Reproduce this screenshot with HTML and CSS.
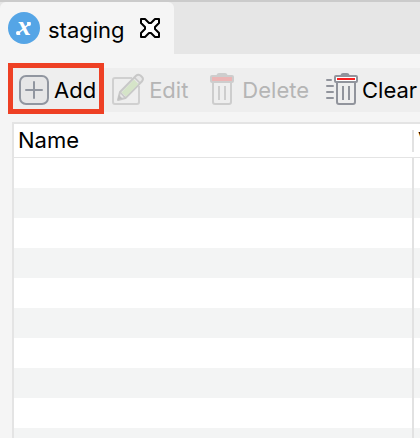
FILE: index.html
```html
<!DOCTYPE html>
<html lang="en">
<head>
<meta charset="utf-8">
<title>staging</title>
<link rel="stylesheet" href="styles.css">
</head>
<body>
<div class="app">
  <header class="tabs">
    <div class="tab">
      <svg class="tab-logo" viewBox="0 0 32 32" aria-hidden="true">
        <circle cx="16" cy="16" r="16" fill="#55a5e6"/>
        <text class="logo-letter" x="16" y="23" text-anchor="middle">x</text>
        <circle cx="21" cy="12" r="2" fill="#fff"/>
        <circle cx="10" cy="21" r="2" fill="#fff"/>
      </svg>
      <span class="tab-title">staging</span>
      <button class="tab-close" type="button" aria-label="Close tab">
        <svg viewBox="0 0 20 20" aria-hidden="true">
          <path d="M1 1H5L9 5H11L15 1H19V5L15 9V11L19 15V19H15L11 15H9L5 19H1V15L5 11V9L1 5Z" fill="#fff" stroke="#000" stroke-width="2" stroke-linejoin="round"/>
        </svg>
      </button>
    </div>
  </header>
  <main class="panel">
    <div class="toolbar">
      <button class="tool tool-marked" type="button">
        <svg class="icon-add" viewBox="0 0 30 30" aria-hidden="true">
          <g fill="none" stroke="#9196a0" stroke-width="2">
            <rect x="1" y="1" width="28" height="28" rx="6" fill="#e6e6e7"/>
            <path d="M15 7V23M7 15H23" stroke-linecap="round"/>
          </g>
        </svg>
        <span>Add</span>
      </button>
      <button class="tool tool-edit" type="button" disabled>
        <svg class="icon-edit" viewBox="0 0 32 32" aria-hidden="true">
          <path d="M20 5H3Q1 5 1 7V29Q1 31 3 31H25Q27 31 27 29V13" fill="none" stroke="#d0d0d0" stroke-width="2"/>
          <path d="M6 27L8 19L24 2.800Q26 .8 28.500 2.500L30 4Q32 6 29.800 8.500L13.500 25Z" fill="#e8e8e8" stroke="#c8c8c8" stroke-width="2" stroke-linejoin="round"/>
          <path d="M9.500 19.500L22 6.500L26.500 11L14 23.500Z" fill="#d5e4c8"/>
          <path d="M22.500 4.500L28 10M8 19L13.500 25" stroke="#c8c8c8" stroke-width="1.500"/>
          <path d="M5.500 27L7 22L10.500 25.500Z" fill="#c0c0c0"/>
        </svg>
        <span>Edit</span>
      </button>
      <button class="tool tool-delete" type="button" disabled>
        <svg class="icon-trash" viewBox="0 0 24 32" aria-hidden="true">
          <path d="M6.500 2Q7 0 9 0H15Q17 0 17.500 2Z" fill="#cdcdcd"/>
          <path d="M3 10V29Q3 31 5 31H19Q21 31 21 29V10M9 13V27M15 13V27" fill="none" stroke="#cdcdcd" stroke-width="2"/>
          <rect x="1" y="3" width="22" height="6" rx="1" fill="#ebb5b5" stroke="#cdcdcd" stroke-width="2"/>
        </svg>
        <span>Delete</span>
      </button>
      <button class="tool tool-clear" type="button">
        <svg class="icon-clear" viewBox="0 0 32 32" aria-hidden="true">
          <path d="M14.500 2Q15 0 17 0H21Q23 0 23.500 2Z" fill="#91949c"/>
          <path d="M11 10V29Q11 31 13 31H27Q29 31 29 29V10M17 13V27M23 13V27" fill="none" stroke="#91949c" stroke-width="2"/>
          <rect x="9" y="3" width="22" height="6" rx="1" fill="#fff" stroke="#91949c" stroke-width="2"/>
          <rect x="11" y="5" width="18" height="2" fill="#fa2020"/>
          <path d="M1 7H5M1 13H7M1 19H7M1 25H7" stroke="#91949c" stroke-width="2" stroke-linecap="round"/>
        </svg>
        <span>Clear</span>
      </button>
    </div>
    <table class="grid">
      <colgroup><col class="col-name"><col></colgroup>
      <thead>
        <tr><th scope="col"><div class="head">Name</div></th><th scope="col"><div class="head head-last">Value</div></th></tr>
      </thead>
      <tbody>
        <tr><td></td><td></td></tr>
        <tr><td></td><td></td></tr>
        <tr><td></td><td></td></tr>
        <tr><td></td><td></td></tr>
        <tr><td></td><td></td></tr>
        <tr><td></td><td></td></tr>
        <tr><td></td><td></td></tr>
        <tr><td></td><td></td></tr>
        <tr><td></td><td></td></tr>
        <tr><td></td><td></td></tr>
      </tbody>
    </table>
  </main>
</div>
</body>
</html>
```
FILE: styles.css
```css
* {
  box-sizing: border-box;
}

body {
  margin: 0;
  background: #f5f5f5;
  color: #000;
  font: 22px/26px Inter, sans-serif;
}

.app {
  height: 100vh;
  overflow: hidden;
}

.tabs {
  display: flex;
  border-top: 2px solid #cbcbcb;
  background: #e6e6e6;
}

.tab {
  display: flex;
  align-items: center;
  padding: 0 14px 0 8px;
  height: 52px;
  border-radius: 6px 6px 0 0;
  background: #f5f5f5;
}

.tab-logo {
  width: 32px;
  height: 32px;
}

.logo-letter {
  fill: #fff;
  font: italic bold 28px "Liberation Serif", serif;
}

.tab-title {
  padding: 4px 15px 0 8px;
}

.tab-close {
  display: flex;
  padding: 0;
  border: 0;
  background: none;
}

.tab-close svg {
  width: 20px;
  height: 20px;
}

.panel {
  padding: 9px 0 0 12px;
}

.toolbar {
  display: flex;
  align-items: center;
  height: 51px;
  margin-left: -4px;
  background: linear-gradient(transparent 5px, #eee 5px, #eee 49px, transparent 49px);
}

.tool {
  display: flex;
  flex: none;
  align-items: center;
  gap: 5px;
  height: 44px;
  padding: 0;
  border: 0;
  background: none;
  color: #000;
  font: inherit;
}

.tool:disabled {
  color: #b5b5b5;
}

.tool span {
  padding-top: 2px;
}

.tool-marked {
  height: 51px;
  padding: 2px 3px 0 6px;
  border: 5px solid #ee4024;
}

.tool-marked span {
  padding-top: 0;
}

.tool-edit {
  margin-left: 8px;
}

.tool-delete {
  gap: 8px;
  margin-left: 22px;
}

.tool-clear {
  gap: 4px;
  margin-left: 17px;
}

.tool svg {
  flex: none;
  height: 32px;
}

.tool .icon-add {
  width: 30px;
  height: 30px;
}

.icon-edit,
.icon-clear {
  width: 32px;
}

.icon-trash {
  width: 24px;
}

.grid {
  width: calc(100% + 160px);
  margin-top: 8px;
  border: 2px solid #e4e4e4;
  border-collapse: separate;
  border-spacing: 0;
  table-layout: fixed;
  background: #fff;
}

.col-name {
  width: 400px;
}

.grid th {
  height: 34px;
  padding: 0;
  border-bottom: 1px solid #e4e4e4;
  font-weight: 400;
  text-align: left;
}

.head {
  height: 22px;
  padding-left: 4px;
  border-right: 2px solid #e2e2e2;
  line-height: 20px;
}

.head-last {
  border-right: 0;
}

.grid td {
  height: 30px;
  padding: 0;
}

.grid td:first-child {
  border-right: 2px solid #e2e2e2;
}

.grid tbody tr:nth-child(even) {
  background: #f3f4f4;
}
```
